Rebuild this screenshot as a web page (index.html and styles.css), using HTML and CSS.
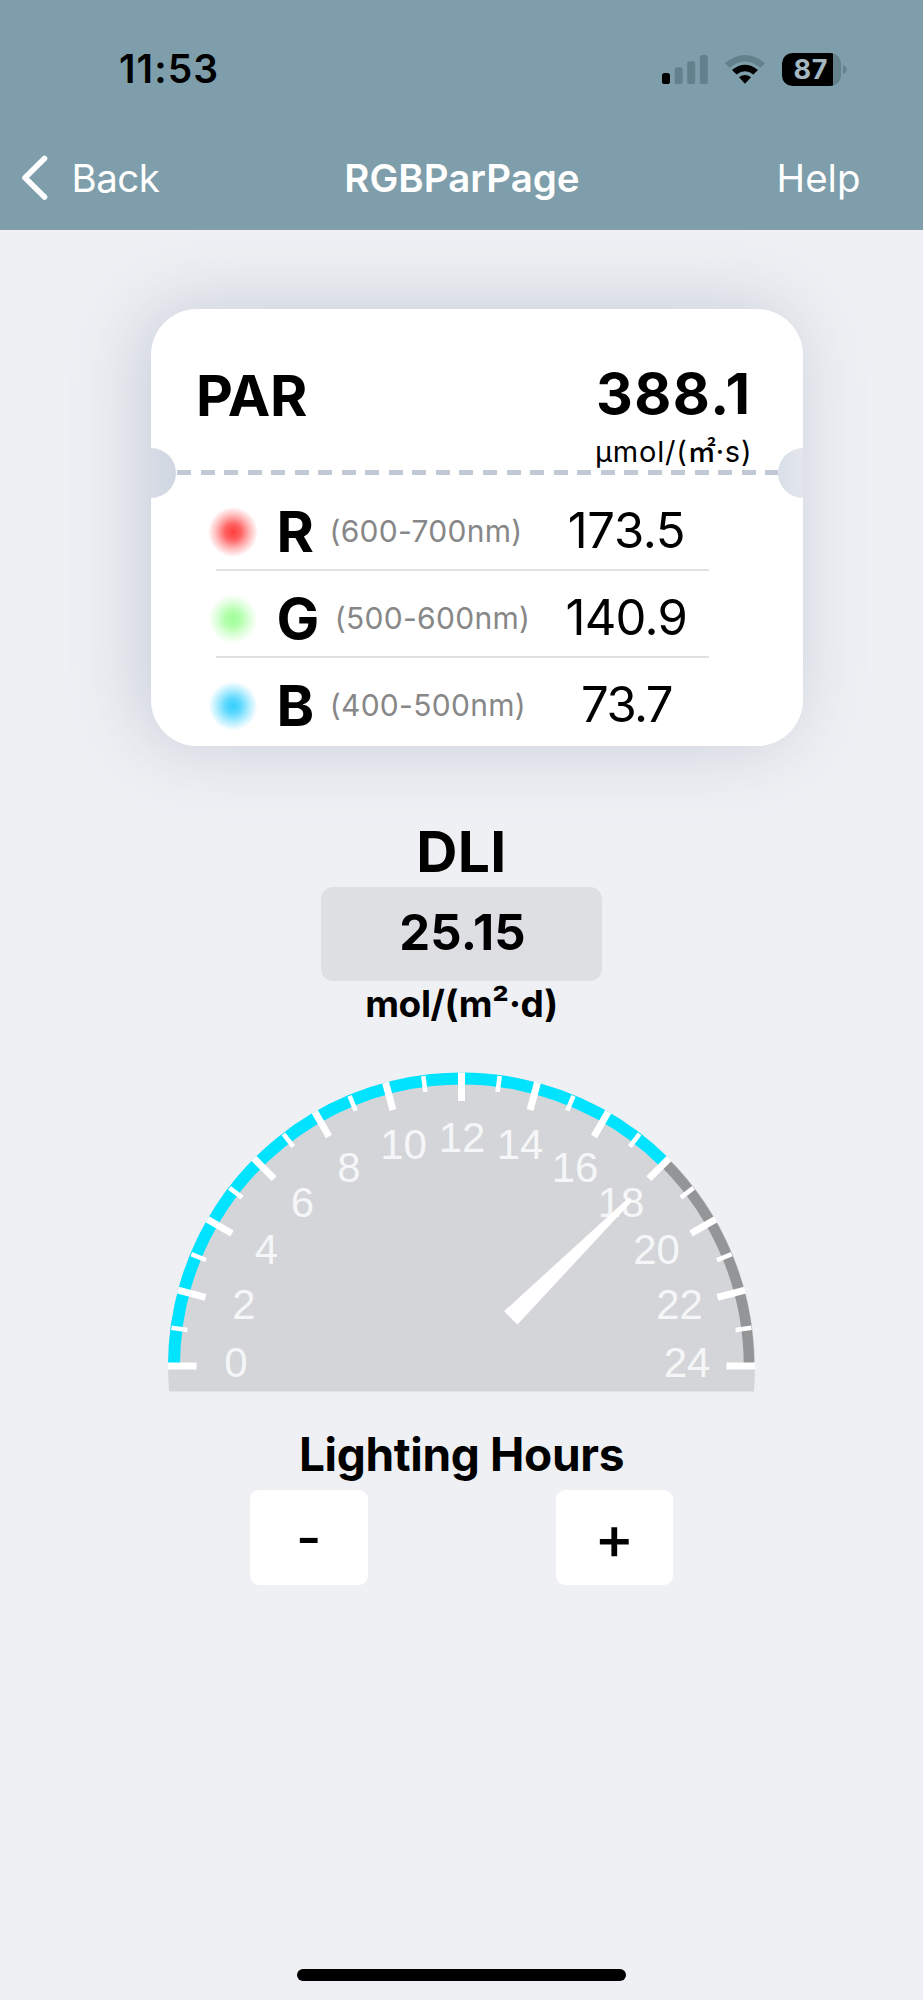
FILE: index.html
```html
<!DOCTYPE html>
<html lang="en">
<head>
<meta charset="utf-8">
<title>RGBParPage</title>
<link rel="stylesheet" href="styles.css">
</head>
<body>
<div class="screen">
  <header class="header">
    <div class="status">
      <span class="time">11:53</span>
      <div class="indicators">
        <svg class="signal" width="46" height="29" viewBox="0 0 46 29">
          <rect x="0" y="18" width="8" height="11" rx="2.6" fill="#000"/>
          <g fill="#63818c"><rect x="12.7" y="12.3" width="8" height="16.7" rx="2.6"/><rect x="25.2" y="6.2" width="8" height="22.8" rx="2.6"/><rect x="37.8" y="0" width="8" height="29" rx="2.6"/></g>
        </svg>
        <svg class="wifi" width="40" height="29" viewBox="0 0 40 29">
          <path d="M0 8.2 Q20-8 40 8.2 L35.3 12.8 Q20 0 4.7 12.8Z" fill="#63818c"/>
          <path d="M7 15 Q20 4.6 33 15 L28.4 19.6 Q20 12.8 11.6 19.6Z"/>
          <path d="M14 22.3 Q20 17.7 26 22.3 L20 28.8Z"/>
        </svg>
        <div class="battery"><span class="level">87</span></div>
        <svg class="cap" width="4" height="9" viewBox="0 0 4 9"><path d="M0 0 Q3.5 1.5 3.5 4.5 T0 9Z" fill="#63818c"/></svg>
      </div>
    </div>
    <nav class="nav">
      <a class="back"><svg width="28" height="46" viewBox="0 0 28 46"><path d="M23.5 3.5 L4 22.8 L23.5 42" fill="none" stroke="#fff" stroke-width="5.6" stroke-linecap="round" stroke-linejoin="round"/></svg><span>Back</span></a>
      <h1 class="title">RGBParPage</h1>
      <a class="help">Help</a>
    </nav>
  </header>

  <main class="content">
    <section class="card">
      <div class="card-head">
        <h2 class="par">PAR</h2>
        <div class="total">
          <div class="total-value">388.1</div>
          <div class="total-unit">μmol/(<span class="square">㎡</span>·s)</div>
        </div>
      </div>
      <div class="tear"><i class="notch notch-left"></i><i class="dashes"></i><i class="notch notch-right"></i></div>
      <div class="rows">
        <div class="row"><i class="glow red"></i><div class="band"><b>R</b><span>(600-700nm)</span></div><div class="value v1">173.5</div></div>
        <div class="row"><i class="glow green"></i><div class="band"><b>G</b><span>(500-600nm)</span></div><div class="value v2">140.9</div></div>
        <div class="row"><i class="glow blue"></i><div class="band"><b>B</b><span>(400-500nm)</span></div><div class="value v3">73.7</div></div>
      </div>
    </section>

    <section class="dli">
      <h2 class="dli-title">DLI</h2>
      <div class="dli-value">25.15</div>
      <div class="dli-unit">mol/(m²·d)</div>
    </section>

    <svg class="gauge" width="588" height="320" viewBox="0 0 588 320">
      <defs>
        <path id="major" d="M0 294H28.5" stroke="#fff" stroke-width="7"/>
        <path id="minor" d="M1 294H17" stroke="#fff" stroke-width="4.6"/>
      </defs>
      <path d="M1.1 319.6 A293.5 293.5 0 1 1 585.9 319.6Z" fill="#d4d5d8"/>
      <path d="M6 294 A287.5 287.5 0 0 1 496.8 90.7" fill="none" stroke="#00e3ff" stroke-width="12"/>
      <path d="M496.8 90.7 A287.5 287.5 0 0 1 581 294" fill="none" stroke="#939597" stroke-width="10.5"/>
      <g>
        <use href="#major"/>
        <use href="#minor" transform="rotate(7.5 293.5 294)"/>
        <use href="#major" transform="rotate(15 293.5 294)"/>
        <use href="#minor" transform="rotate(22.5 293.5 294)"/>
        <use href="#major" transform="rotate(30 293.5 294)"/>
        <use href="#minor" transform="rotate(37.5 293.5 294)"/>
        <use href="#major" transform="rotate(45 293.5 294)"/>
        <use href="#minor" transform="rotate(52.5 293.5 294)"/>
        <use href="#major" transform="rotate(60 293.5 294)"/>
        <use href="#minor" transform="rotate(67.5 293.5 294)"/>
        <use href="#major" transform="rotate(75 293.5 294)"/>
        <use href="#minor" transform="rotate(82.5 293.5 294)"/>
        <use href="#major" transform="rotate(90 293.5 294)"/>
        <use href="#minor" transform="rotate(97.5 293.5 294)"/>
        <use href="#major" transform="rotate(105 293.5 294)"/>
        <use href="#minor" transform="rotate(112.5 293.5 294)"/>
        <use href="#major" transform="rotate(120 293.5 294)"/>
        <use href="#minor" transform="rotate(127.5 293.5 294)"/>
        <use href="#major" transform="rotate(135 293.5 294)"/>
        <use href="#minor" transform="rotate(142.5 293.5 294)"/>
        <use href="#major" transform="rotate(150 293.5 294)"/>
        <use href="#minor" transform="rotate(157.5 293.5 294)"/>
        <use href="#major" transform="rotate(165 293.5 294)"/>
        <use href="#minor" transform="rotate(172.5 293.5 294)"/>
        <use href="#major" transform="rotate(180 293.5 294)"/>
      </g>
      <g class="marks">
        <text x="68" y="304.7">0</text><text x="76" y="246.5">2</text><text x="98.5" y="192">4</text>
        <text x="134.5" y="145.3">6</text><text x="181" y="109.7">8</text><text x="235.5" y="87">10</text>
        <text x="294" y="79.5">12</text><text x="352" y="87">14</text><text x="407" y="109.7">16</text>
        <text x="453" y="145.3">18</text><text x="488.5" y="192">20</text><text x="511.5" y="246.5">22</text>
        <text x="519" y="304.7">24</text>
      </g>
      <path d="M336 239.3 L456.5 129.5 Q461 124.5 463 126.5 Q464.5 129 461 132.5 L349.5 252.4Z" fill="#fff"/>
    </svg>

    <section class="hours">
      <h2 class="hours-title">Lighting Hours</h2>
      <div class="stepper"><button class="step">-</button><button class="step plus">+</button></div>
    </section>
  </main>

  <div class="home"></div>
</div>
</body>
</html>
```
FILE: styles.css
```css
* { box-sizing: border-box; }
body { margin: 0; background: #eff0f4; font-family: Inter, "Liberation Sans", sans-serif; color: #000; }
h1, h2 { margin: 0; font-weight: 700; }
i { display: block; }
.screen { width: 923px; height: 2000px; display: flex; flex-direction: column; overflow: hidden; }

.header { height: 230px; background: #7d9eaa; border-bottom: 1px solid #8a9caa; color: #fff; }
.status { height: 134px; padding: 49px 76px 0 119px; display: flex; justify-content: space-between; color: #000; }
.time { font-size: 39px; line-height: 40px; font-weight: 600; letter-spacing: 1.1px; }
.indicators { display: flex; height: 40px; align-items: center; }
.wifi { margin-left: 17px; }
.battery { margin-left: 17px; width: 59px; height: 33px; border-radius: 10.5px; background: linear-gradient(90deg, #000 51px, #63818c 51px); }
.level { display: block; padding-left: 11.5px; font-size: 27px; line-height: 34px; font-weight: 700; letter-spacing: 0.6px; color: #a3b8c0; }
.cap { margin-left: 2px; }
.nav { height: 88px; padding: 0 62.5px 0 20.5px; display: grid; grid-template-columns: 1fr auto 1fr; align-items: center; font-size: 38.5px; line-height: 48px; }
.back { display: flex; align-items: center; gap: 23px; letter-spacing: -0.5px; }
.title { font-size: 38.5px; font-weight: 600; padding-left: 43px; }
.help { text-align: right; }

.content { flex: 1; display: flex; flex-direction: column; }
.card { width: 652px; height: 437px; margin: 79px 0 0 151px; border-radius: 46px; background: #fff; box-shadow: -9px -2px 74px 2px #c8ced9; }
.card-head { height: 161px; padding: 55px 51px 0 45px; display: flex; justify-content: space-between; }
.par { font-size: 57px; line-height: 63px; letter-spacing: -0.4px; }
.total { width: 156px; white-space: nowrap; }
.total-value { font-size: 57px; line-height: 60px; font-weight: 700; letter-spacing: 1.45px; }
.total-unit { margin: 10px 0 0 -1px; height: 36px; font-size: 29px; line-height: 36px; letter-spacing: 0.8px; }
.square { font-family: "Noto Sans CJK SC", sans-serif; font-size: 28px; line-height: 0; font-weight: 500; letter-spacing: 0; }
.tear { height: 5px; display: flex; align-items: center; }
.notch { width: 25px; height: 50px; margin: -23px 0; flex: none; }
.notch-left { border-radius: 0 25px 25px 0; background: linear-gradient(90deg, #d7dce6, #d0d7e2); }
.notch-right { border-radius: 25px 0 0 25px; background: linear-gradient(90deg, #dadfe7, #e3e6ed); }
.dashes { flex: 1; height: 5px; margin-left: 1px; background: repeating-linear-gradient(90deg, #c1c9d4 0 14px, transparent 14px 23.54px); }
.rows { width: 493px; margin: 9px 0 0 64.5px; }
.row { width: 501px; height: 87px; margin-left: -8px; padding: 10px 0 2px; display: grid; grid-template-columns: 50px 271px 120px; column-gap: 19px; align-items: center; background: linear-gradient(#e0e1e3, #e0e1e3) 8px 100% / 493px 2px no-repeat; }
.row:last-child { background: none; }
.glow { width: 50px; height: 50px; border-radius: 50%; }
.red { background: radial-gradient(circle closest-side, #ff3c3c, #ff6262 32%, #ffb5b5 65%, #fff 100%); }
.green { background: radial-gradient(circle closest-side, #a0ff98, #b2ffac 32%, #dcffd9 65%, #fff 98%); }
.blue { background: radial-gradient(circle closest-side, #33cfff, #61d9ff 32%, #b3edff 65%, #fff 98%); }
.band { display: flex; align-items: center; gap: 15.5px; }
.band b { font-size: 57px; line-height: 60px; font-weight: 700; }
.band span { font-size: 30px; line-height: 40px; letter-spacing: 0.3px; color: #878787; white-space: nowrap; margin-top: -1px; }
.value { margin: -1px 0 1px; font-size: 49px; line-height: 60px; text-align: center; white-space: nowrap; }
.v1 { letter-spacing: -0.35px; }
.v2 { letter-spacing: -0.75px; margin-left: -1px; }
.v3 { letter-spacing: -1.6px; }

.dli { margin-top: 74px; display: flex; flex-direction: column; align-items: center; }
.dli-title { font-size: 57px; line-height: 63px; height: 67px; letter-spacing: 0.3px; }
.dli-value { width: 281.5px; height: 93.5px; border-radius: 12px; background: #dedfe2; text-align: center; font-size: 49px; line-height: 91.5px; font-weight: 700; letter-spacing: 0.25px; padding-left: 2px; }
.dli-unit { height: 45px; font-size: 37px; line-height: 45px; font-weight: 700; letter-spacing: -0.4px; }
.gauge { display: block; margin: 46.5px 0 0 168px; }
.marks { font-family: "Liberation Sans", Arial, sans-serif; font-size: 42px; text-anchor: middle; fill: #f5f6f7; }

.hours { display: flex; flex-direction: column; align-items: center; margin-top: 31.5px; }
.hours-title { font-size: 46px; line-height: 60px; height: 66.5px; letter-spacing: -0.33px; }
.stepper { display: flex; gap: 188px; }
.step { width: 117.5px; height: 94.5px; padding: 0; border: 0; border-radius: 9px; background: #fff; color: #000; font: 500 55px/88px Inter, sans-serif; }
.plus { font-size: 60px; }

.home { width: 329px; height: 12px; margin: 0 0 19px 297px; border-radius: 6px; background: #000; }
```
